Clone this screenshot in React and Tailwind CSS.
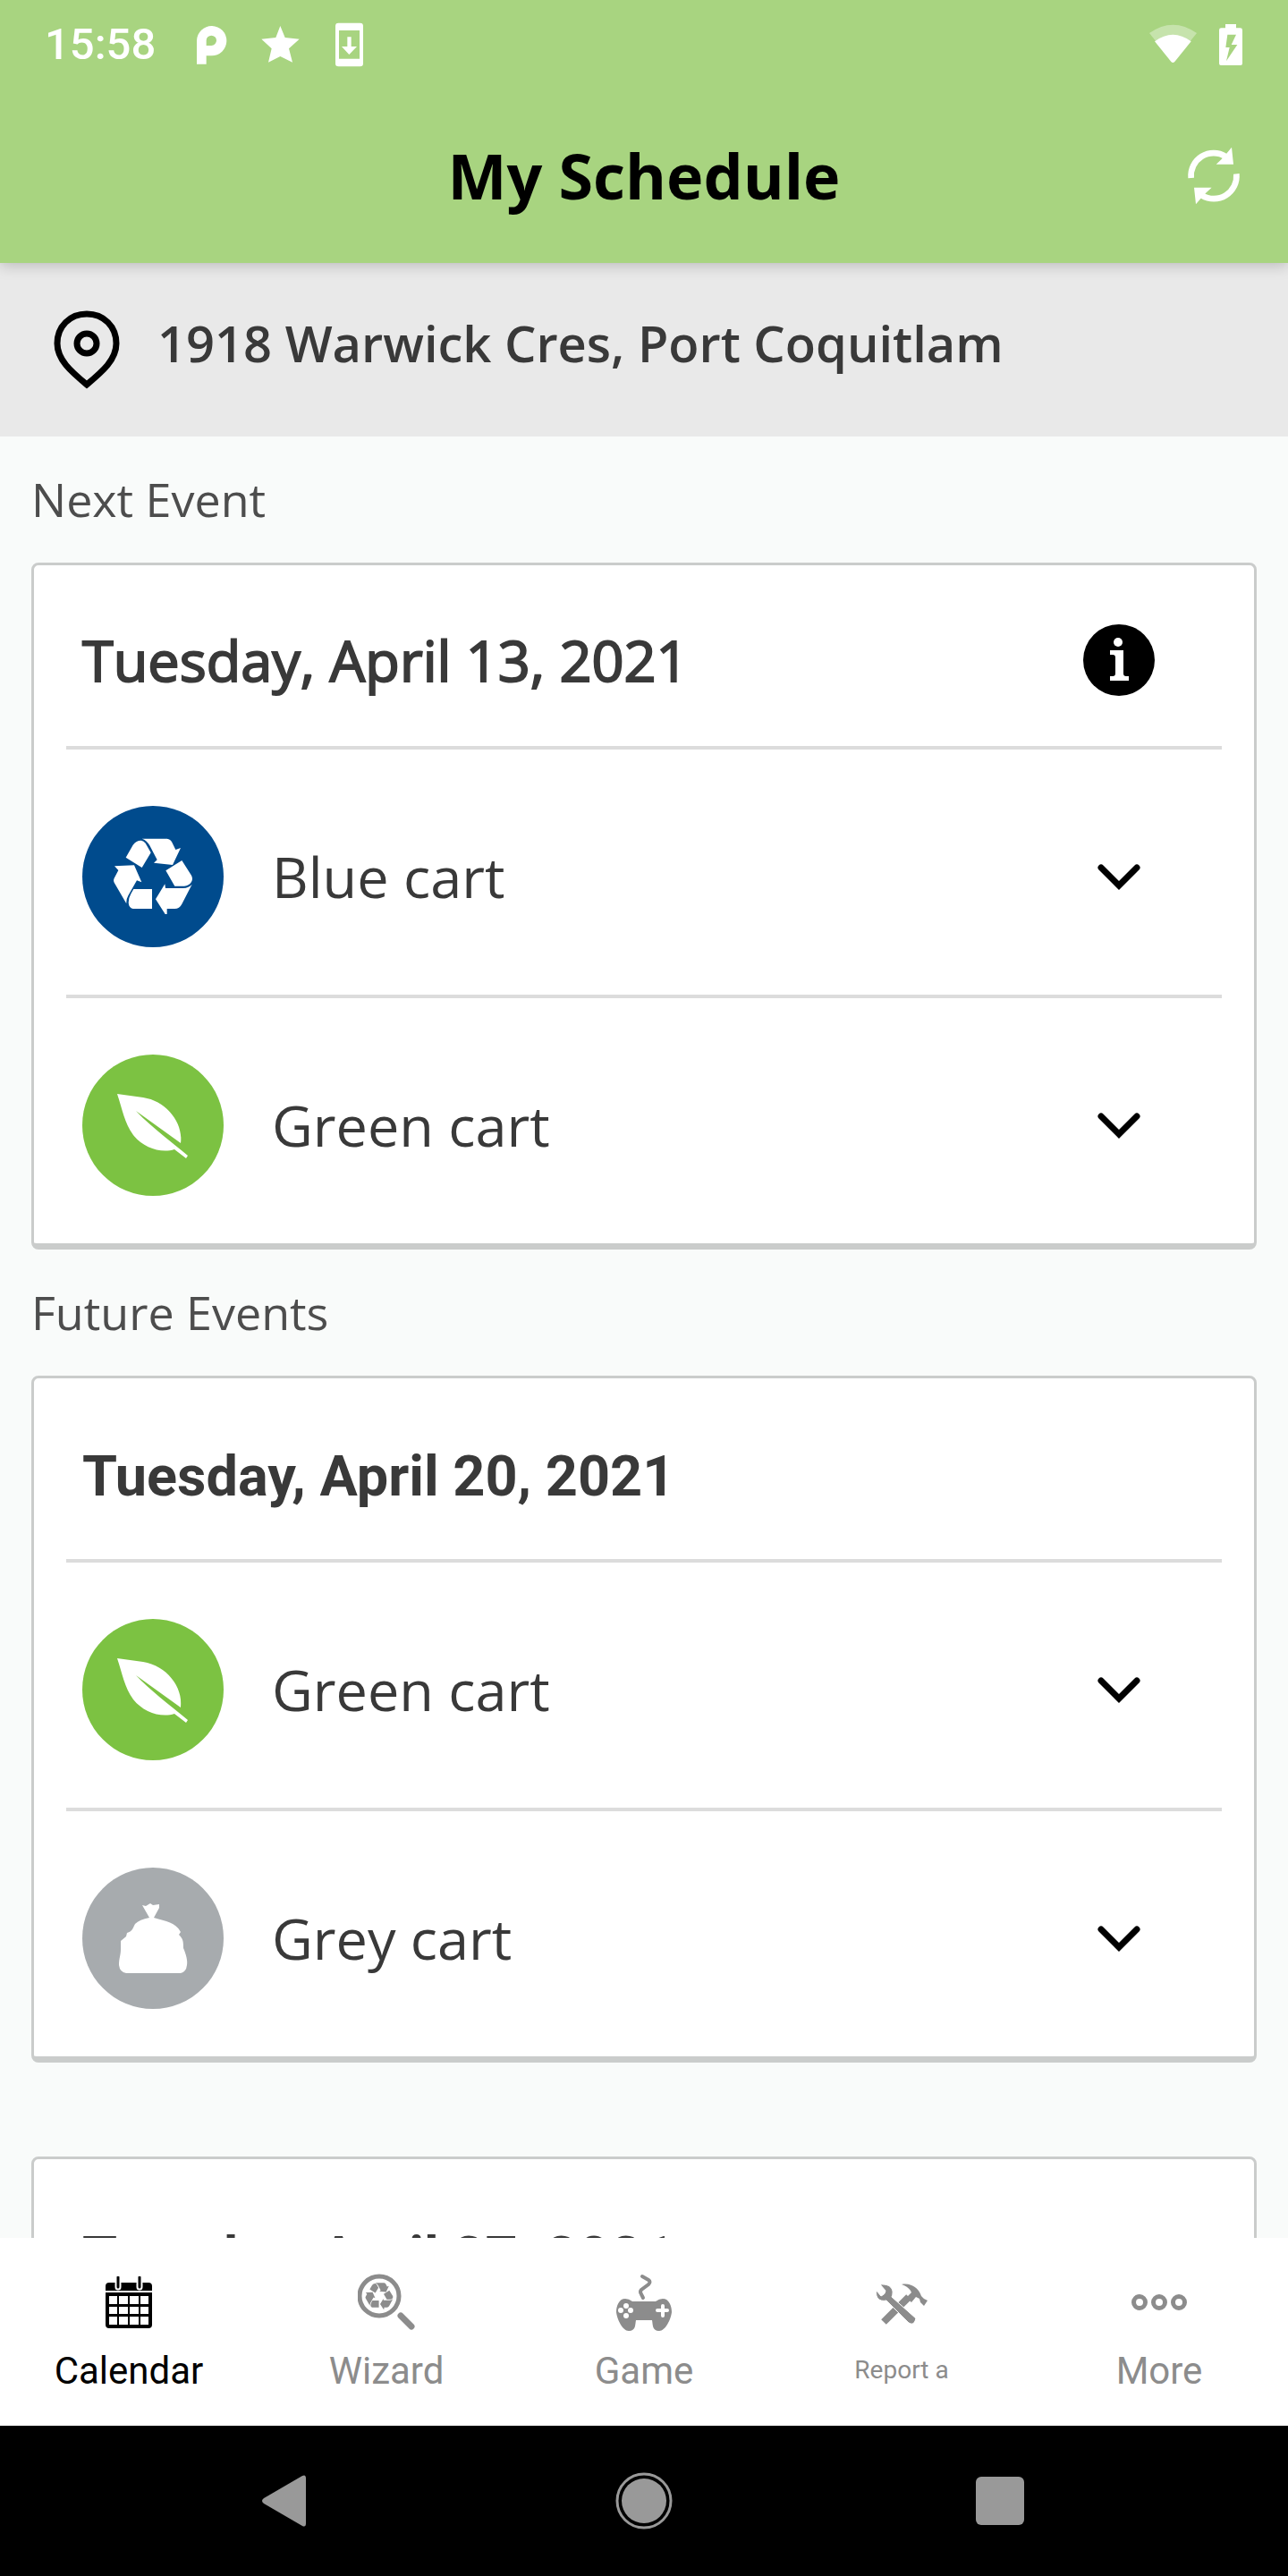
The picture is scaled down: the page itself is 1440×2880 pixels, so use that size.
import React, { useState } from 'react';

const RECYCLE_PATH =
    'M182 236 L206 194 Q218 178 234 179 Q242 180 248 188 L266 220 L236 270 Z ' +
    'M236 173 L320 173 Q332 175 337 185 L349 210 L366 204 L339 261 L276 254 L287 244 L262 196 Q252 178 236 173 Z ' +
    'M316 280 L370 246 L402 296 Q408 308 402 318 Q394 331 378 332 L346 332 Z ' +
    'M404 326 L370 392 Q362 408 346 408 L320 408 L320 426 L314 426 L282 376 L313 325 L315 339 L374 339 Q394 338 404 326 Z ' +
    'M144 265 L210 262 L235 319 L219 313 L190 364 Q183 376 184 391 L143 320 Q139 312 144 304 L157 279 Z ' +
    'M270 342 L270 408 L206 408 Q192 405 191 388 Q191 372 199 358 L208 342 Z';

const RecycleIcon = () => (
    <svg viewBox="36 63 474 474" className="size-[158px]" aria-hidden="true">
        <circle cx="273" cy="300" r="237" fill="#004b8d" />
        <path d={RECYCLE_PATH} fill="#fff" />
    </svg>
);

const LeafIcon = () => (
    <svg viewBox="0 0 158 158" className="size-[158px]" aria-hidden="true">
        <circle cx="79" cy="79" r="79" fill="#7cc242" />
        <path
            d="M39 44 L68 48 C94 52 113 76 110 99 L60 63 C75 79 96 95 118 113 L116 116 L103 106 C88 111 68 104 57 90 C47 76 45 62 39 44 Z"
            fill="#fff"
        />
    </svg>
);

const BagIcon = () => (
    <svg viewBox="0 0 158 158" className="size-[158px]" aria-hidden="true">
        <circle cx="79" cy="79" r="79" fill="#a7abae" />
        <path
            d="M67 42 L71 43 L76 40 L79 42 L86 41 L86 45 L80 56 C94 60 104 61 110 72 L108 75 C113 80 113 83 113 90 C116 97 118 104 117 109 Q116 117 110 118 L49 118 Q42 117 41 109 C41 101 43 98 43 91 L43 82 L49 77 L50 73 C56 71 56 69 59 63 Q64 58 75 56 Z"
            fill="#fff"
        />
    </svg>
);

const events = {
    next: [
        {
            date: 'Tuesday, April 13, 2021',
            hasInfo: true,
            carts: [
                { name: 'Blue cart', icon: RecycleIcon },
                { name: 'Green cart', icon: LeafIcon },
            ],
        },
    ],
    future: [
        {
            date: 'Tuesday, April 20, 2021',
            carts: [
                { name: 'Green cart', icon: LeafIcon },
                { name: 'Grey cart', icon: BagIcon },
            ],
        },
        {
            date: 'Tuesday, April 27, 2021',
            carts: [],
        },
    ],
};

const CalendarIcon = () => (
    <svg viewBox="0 0 52 58" className="h-[58px] w-[52px]" aria-hidden="true">
        <path d="M0 16 V11 Q0 7 4 7 H48 Q52 7 52 11 V16 Z" fill="currentColor" />
        <path d="M14 8 V12 M38 8 V12" stroke="#fff" strokeWidth="7" strokeLinecap="round" />
        <path d="M14 1 V12 M38 1 V12" stroke="currentColor" strokeWidth="3" strokeLinecap="round" />
        <path d="M0 18 H52 V54 Q52 58 48 58 H4 Q0 58 0 54 Z" fill="currentColor" />
        <path
            d="M4 22h9v9H4z M15 22h10v9H15z M27 22h10v9H27z M39 22h9v9h-9z M4 34h9v8H4z M15 34h10v8H15z M27 34h10v8H27z M39 34h9v8h-9z M4 45h9v9H4z M15 45h10v9H15z M27 45h10v9H27z M39 45h9v9h-9z"
            fill="#fff"
        />
    </svg>
);

const WizardIcon = () => (
    <svg viewBox="0 0 64 64" className="size-16" fill="none" stroke="currentColor" aria-hidden="true">
        <circle cx="24" cy="25" r="22" strokeWidth="5" />
        <path d="M48 47 L60 59" strokeWidth="7" strokeLinecap="round" />
        <g transform="translate(-8 -10) scale(0.117)">
            <path d={RECYCLE_PATH} fill="currentColor" stroke="none" />
        </g>
    </svg>
);

const GameIcon = () => (
    <svg viewBox="0 0 64 64" className="size-16" aria-hidden="true">
        <path d="M30 3 L37 7 Q40 9 37 12 L29 18 Q27 20 29 23 L31 27" fill="none" stroke="currentColor" strokeWidth="4" strokeLinecap="round" />
        <path
            d="M11 28 Q15 28 19 31 H45 Q49 28 53 28 C60 28 63 36 63 43 C62 51 56 64 49 64 C41 64 42 57 41 52 H23 C22 57 23 64 15 64 C8 64 2 51 1 43 C1 36 4 28 11 28 Z"
            fill="currentColor"
        />
        <g fill="#fff">
            <circle cx="12" cy="36" r="3" />
            <circle cx="6" cy="41" r="3" />
            <circle cx="17" cy="41" r="3" />
            <circle cx="12" cy="47" r="3" />
        </g>
        <path d="M53 36 V47 M47 41 H58" stroke="#fff" strokeWidth="4" strokeLinecap="round" />
    </svg>
);

const ReportIcon = () => (
    <svg viewBox="0 0 58 46" className="mt-1 h-[46px] w-[58px]" aria-hidden="true">
        <path d="M37 15 L9 43" stroke="currentColor" strokeWidth="8" />
        <path d="M29 1 C40 -1 48 5 51 14 L54 17 L58 19 L54 25 L50 21 L49 17 L45 15 L40 21 L34 16 L40 10 C38 5 34 3 29 1 Z" fill="currentColor" />
        <path
            d="M5 1 L11 8 Q11 12 6 14 L1 8 C-1 15 4 21 12 19 L37 44 Q42 47 44 42 L45 39 L18 15 C21 8 18 0 5 1 Z"
            fill="currentColor"
            stroke="#fff"
            strokeWidth="1"
        />
    </svg>
);

const MoreIcon = () => (
    <svg viewBox="0 0 62 18" className="h-[18px] w-[62px]" fill="none" stroke="currentColor" strokeWidth="5" aria-hidden="true">
        <circle cx="9" cy="9" r="6.5" />
        <circle cx="31" cy="9" r="6.5" />
        <circle cx="53" cy="9" r="6.5" />
    </svg>
);

const tabs = [
    { label: 'Calendar', icon: CalendarIcon },
    { label: 'Wizard', icon: WizardIcon },
    { label: 'Game', icon: GameIcon },
    { label: 'Report a', icon: ReportIcon, small: true },
    { label: 'More', icon: MoreIcon },
];

const StatusBar = () => (
    <div className="flex h-[100px] items-center justify-between pr-[51px] pl-[50px] font-[Roboto,sans-serif] text-white">
        <div className="flex items-center">
            <span className="text-[49px] leading-[60px] font-medium">15:58</span>
            <svg viewBox="663 70 558 156" className="ml-[46px] h-[52px] w-[186px]" fill="#fff" aria-hidden="true">
                <path fillRule="evenodd" d="M663 213 V134 A50 50 0 1 1 712 185 H695 V213 Z M695 151 H712 A17 17 0 1 0 695 134 Z" />
                <path d="M943 85 L959 124 L1007 129 L972 161 L984 207 L943 187 L903 207 L914 161 L880 129 L928 124 Z" />
                <path
                    fillRule="evenodd"
                    d="M1138 75 H1211 Q1221 75 1221 85 V211 Q1221 221 1211 221 H1138 Q1128 221 1128 211 V85 Q1128 75 1138 75 Z M1140 100 V195 H1209 V100 Z"
                />
                <path d="M1168 122 H1181 V154 H1200 L1174 181 L1149 154 H1168 Z" />
            </svg>
        </div>
        <svg viewBox="975 75 312 144" className="h-12 w-[104px]" fill="#fff" aria-hidden="true">
            <path d="M1054 207 L975 108 Q1054 52 1134 108 Z" opacity="0.35" />
            <path d="M1048 204 L993 136 Q1054 91 1115 136 L1060 204 Q1054 210 1048 204 Z" />
            <path
                fillRule="evenodd"
                d="M1230 78 H1266 V91 H1280 Q1287 91 1287 98 V210 Q1287 216 1281 216 H1215 Q1209 216 1209 210 V98 Q1209 91 1216 91 H1230 Z M1237 113 L1231 156 H1244 L1233 202 L1270 147 H1250 L1266 113 Z"
            />
        </svg>
    </div>
);

const Header = () => (
    <header className="relative z-10 bg-[#a8d480] shadow-[0_2px_16px_rgba(0,0,0,0.22)]">
        <StatusBar />
        <div className="grid h-[194px] grid-cols-[1fr_auto_1fr] items-center px-[53px] pb-0.5">
            <h1 className="col-start-2 text-[70px] leading-[96px] font-bold text-black">My Schedule</h1>
            <button type="button" aria-label="Refresh" className="justify-self-end">
                <svg viewBox="1100 490 180 195" className="h-[65px] w-[60px]" fill="none" stroke="#fff" aria-hidden="true">
                    <path d="M1114 595 A76 76 0 0 1 1230 523 M1266 581 A76 76 0 0 1 1150 653" strokeWidth="20" />
                    <path d="M1250 492 L1256 549 H1198 L1216 532 L1232 514 Z M1130 683 L1124 627 H1183 L1165 644 L1149 661 Z" fill="#fff" stroke="none" />
                </svg>
            </button>
        </div>
    </header>
);

const CartRow = ({ name, icon: Icon }) => {
    return (
        <li className="border-t-4 border-[#dcdcdc]">
            <button type="button" aria-label={`Show ${name} details`} className="flex h-[274px] w-full items-center pt-2.5 pr-[91px] pl-[18px] text-left">
                <Icon />
                <span className="ml-[54px] flex-1 text-[63px] leading-[88px] text-[#393939]">{name}</span>
                <svg viewBox="0 0 48 30" className="h-[30px] w-12" fill="none" stroke="#000" strokeWidth="7" aria-hidden="true">
                    <path d="M4 5 L24 25 L44 5" strokeLinecap="round" />
                </svg>
            </button>
        </li>
    );
};

const EventCard = ({ event }) => {
    return (
        <article className="mx-[35px] shrink-0 rounded-lg border-3 border-b-7 border-[#cacccb] bg-white px-9">
            <div className="flex h-[202px] items-center justify-between pt-2.5 pr-[75px] pl-[18px] text-[#393939]">
                {event.hasInfo ? (
                    <h3 className="text-[63px] leading-[88px] font-normal [-webkit-text-stroke:2px_#393939]">{event.date}</h3>
                ) : (
                    <h3 className="pt-2 font-[Roboto,sans-serif] text-[63px] leading-[76px] font-bold">{event.date}</h3>
                )}
                {event.hasInfo && (
                    <button type="button" aria-label="Event information">
                        <svg viewBox="0 0 80 80" className="size-20" aria-hidden="true">
                            <circle cx="40" cy="40" r="40" fill="#000" />
                            <circle cx="39" cy="20" r="5" fill="#fff" />
                            <path d="M30 29 H45 V55 Q45 58 48 58 H51 V63 H30 V58 H33 Q36 58 36 55 V37 Q36 34 33 34 H30 Z" fill="#fff" />
                        </svg>
                    </button>
                )}
            </div>
            <ul>
                {event.carts.map((cart) => (
                    <CartRow key={cart.name} name={cart.name} icon={cart.icon} />
                ))}
            </ul>
        </article>
    );
};

const SectionTitle = ({ children }) => (
    <h2 className="flex h-[141px] shrink-0 items-center px-[35px] pb-0.5 text-[52px] leading-[72px] font-normal text-[#4d4d4d]">{children}</h2>
);

const TabBar = () => {
    const [active, setActive] = useState('Calendar');

    return (
        <nav className="grid h-[210px] shrink-0 grid-cols-5 bg-white font-[Roboto,sans-serif]">
            {tabs.map(({ label, icon: Icon, small }) => (
                <button
                    key={label}
                    type="button"
                    onClick={() => setActive(label)}
                    className={`flex flex-col items-center pt-10 ${active === label ? 'text-black' : 'text-[#8c8c8c]'}`}
                >
                    <span className="flex h-16 items-center">
                        <Icon />
                    </span>
                    <span className={`flex h-[88px] items-center ${small ? 'text-[28px]' : 'text-[42px]'}`}>{label}</span>
                </button>
            ))}
        </nav>
    );
};

const SystemNav = () => (
    <div className="flex h-[168px] shrink-0 items-center justify-between bg-black pr-[295px] pl-[292px]">
        <button type="button" aria-label="Back">
            <svg viewBox="0 0 56 58" className="h-[58px] w-14" fill="#999" aria-hidden="true">
                <path d="M46 1 Q50 -1 50 4 V54 Q50 59 46 57 L3 32 Q-1 29 3 26 Z" />
            </svg>
        </button>
        <button type="button" aria-label="Home">
            <svg viewBox="0 0 64 64" className="size-16" aria-hidden="true">
                <circle cx="32" cy="32" r="30" fill="none" stroke="#999" strokeWidth="3" />
                <circle cx="32" cy="32" r="25" fill="#999" />
            </svg>
        </button>
        <button type="button" aria-label="Recent apps" className="h-[54px] w-[54px] rounded-md bg-[#999]" />
    </div>
);

const App = () => {
    return (
        <div className="flex h-screen flex-col overflow-hidden bg-[#f9fbfa] font-['Open_Sans',sans-serif]">
            <Header />
            <main className="flex min-h-0 flex-1 flex-col overflow-hidden">
                <div className="flex h-[194px] shrink-0 items-center bg-[#e9e9e9] px-[60px]">
                    <svg viewBox="0 0 74 88" className="h-[88px] w-[74px]" fill="none" stroke="#000" strokeWidth="7" aria-hidden="true">
                        <path d="M37 4 C18 4 4 18 4 37 C4 55 19 68 37 83 C55 68 70 55 70 37 C70 18 56 4 37 4 Z" />
                        <circle cx="37" cy="37" r="11" />
                    </svg>
                    <span className="pb-4 pl-[42px] text-[56px] leading-[76px] font-semibold text-[#393939]">1918 Warwick Cres, Port Coquitlam</span>
                </div>
                <SectionTitle>Next Event</SectionTitle>
                {events.next.map((event) => (
                    <EventCard key={event.date} event={event} />
                ))}
                <SectionTitle>Future Events</SectionTitle>
                <div className="flex shrink-0 flex-col gap-[105px]">
                    {events.future.map((event) => (
                        <EventCard key={event.date} event={event} />
                    ))}
                </div>
            </main>
            <TabBar />
            <SystemNav />
        </div>
    );
};

export default App;
